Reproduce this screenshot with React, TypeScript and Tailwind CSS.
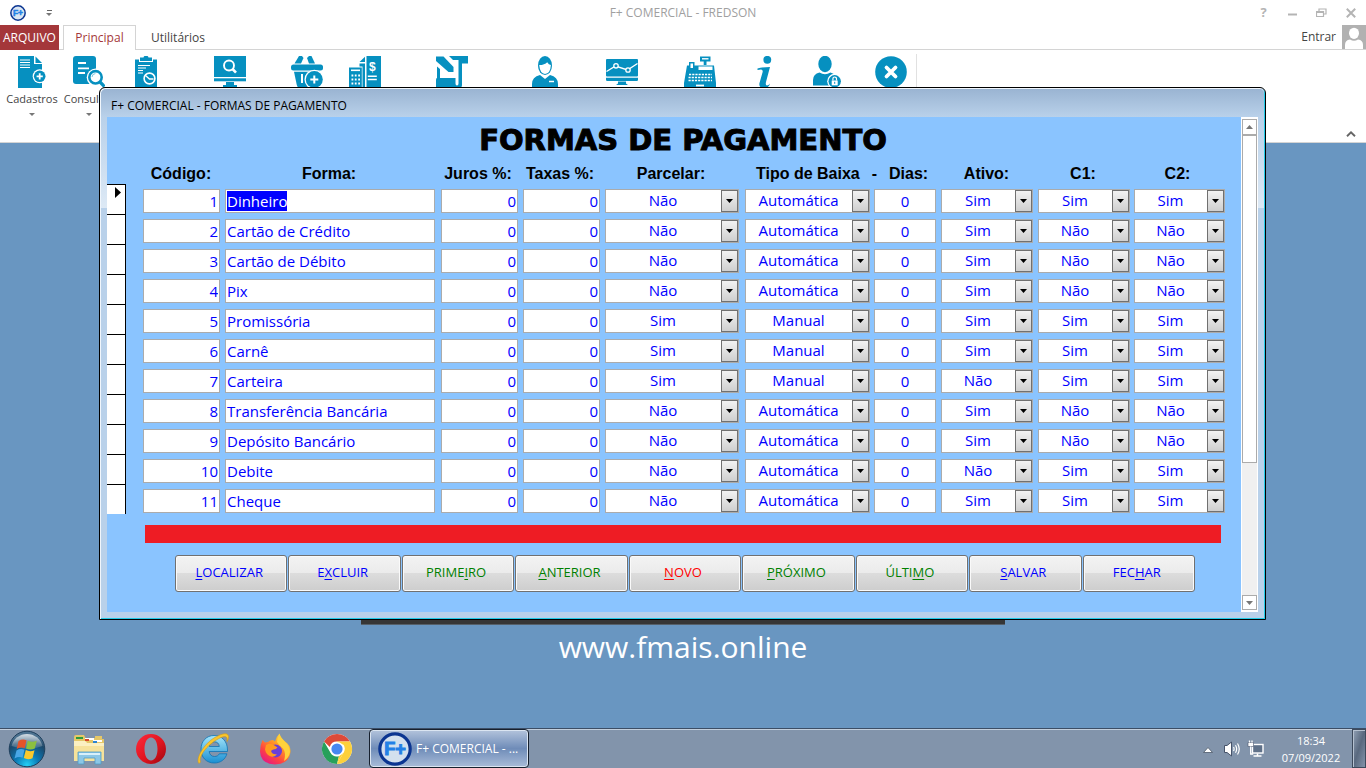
import { useEffect, useRef, useState } from "react";
import type { ReactNode } from "react";

const UI = "font-['Open_Sans','Noto_Sans',sans-serif]";

type Row = {
  codigo: number;
  forma: string;
  parcelar: string;
  tipo: string;
  ativo: string;
  c1: string;
  c2: string;
};

const ROWS: Row[] = [
  { codigo: 1, forma: "Dinheiro", parcelar: "Não", tipo: "Automática", ativo: "Sim", c1: "Sim", c2: "Sim" },
  { codigo: 2, forma: "Cartão de Crédito", parcelar: "Não", tipo: "Automática", ativo: "Sim", c1: "Não", c2: "Não" },
  { codigo: 3, forma: "Cartão de Débito", parcelar: "Não", tipo: "Automática", ativo: "Sim", c1: "Não", c2: "Não" },
  { codigo: 4, forma: "Pix", parcelar: "Não", tipo: "Automática", ativo: "Sim", c1: "Não", c2: "Não" },
  { codigo: 5, forma: "Promissória", parcelar: "Sim", tipo: "Manual", ativo: "Sim", c1: "Sim", c2: "Sim" },
  { codigo: 6, forma: "Carnê", parcelar: "Sim", tipo: "Manual", ativo: "Sim", c1: "Sim", c2: "Sim" },
  { codigo: 7, forma: "Carteira", parcelar: "Sim", tipo: "Manual", ativo: "Não", c1: "Sim", c2: "Sim" },
  { codigo: 8, forma: "Transferência Bancária", parcelar: "Não", tipo: "Automática", ativo: "Sim", c1: "Não", c2: "Não" },
  { codigo: 9, forma: "Depósito Bancário", parcelar: "Não", tipo: "Automática", ativo: "Sim", c1: "Não", c2: "Não" },
  { codigo: 10, forma: "Debite", parcelar: "Não", tipo: "Automática", ativo: "Não", c1: "Sim", c2: "Sim" },
  { codigo: 11, forma: "Cheque", parcelar: "Não", tipo: "Automática", ativo: "Sim", c1: "Sim", c2: "Sim" },
];

/* ---------- Ribbon icons ---------- */

function RibbonSvg({ children }: { children: ReactNode }) {
  return (
    <svg width="32" height="32" viewBox="0 0 32 32" fill="#0690c0" className="block shrink-0" aria-hidden="true">
      {children}
    </svg>
  );
}

const IconCadastros = (
  <RibbonSvg>
    <path d="M2 0h16v8h8v24H2z" />
    <path d="M19.5 0.5 26 7h-6.5z" />
    <path d="M4 4h10M4 6.5h10M4 9h10M4 11.5h10" stroke="#fff" strokeWidth="1" />
    <circle cx="23.7" cy="20.3" r="7" fill="#fff" />
    <circle cx="23.7" cy="20.3" r="5.8" />
    <path d="M23.7 17.2v6.2M20.6 20.3h6.2" stroke="#fff" strokeWidth="1.8" />
  </RibbonSvg>
);

const IconConsultas = (
  <RibbonSvg>
    <rect x="0" y="0" width="23" height="28" rx="3" />
    <path d="M5 7h8M5 12.3h11M5 17h7" stroke="#fff" strokeWidth="1.8" />
    <circle cx="22.7" cy="21.5" r="9" fill="#fff" />
    <circle cx="22.5" cy="21.3" r="6.2" fill="#fff" stroke="#0690c0" strokeWidth="2.6" />
    <path d="m27 26 4.5 4.5" stroke="#0690c0" strokeWidth="3.2" />
    <path d="M19 21a3.6 3.6 0 0 1 3.4-3.4" stroke="#7cc6df" strokeWidth="1" fill="none" />
  </RibbonSvg>
);

const IconRelatorios = (
  <RibbonSvg>
    <path d="M5 3.5h4V6h14V3.5h4V32H5z" />
    <path d="M10 1.5h3.5a2.6 2.6 0 0 1 5 0H22V5H10z" />
    <path d="M8 9.5h12M8 12h8M8 14.500h5M8 17h5" stroke="#fff" strokeWidth="1.1" />
    <circle cx="19.5" cy="22.500" r="5.4" stroke="#fff" strokeWidth="1.6" />
    <path d="M15.500 19.500 19.500 23h4" stroke="#fff" strokeWidth="1.3" fill="none" />
  </RibbonSvg>
);

const IconMonitorSearch = (
  <RibbonSvg>
    <rect x="0" y="0" width="32" height="21" />
    <rect x="0" y="22.300" width="32" height="3" />
    <path d="M12 26h8v3h3v3H9v-3h3z" />
    <circle cx="15" cy="9.500" r="5" fill="none" stroke="#fff" strokeWidth="1.9" />
    <path d="m18.500 13 3.500 3.700" stroke="#fff" strokeWidth="2.600" />
  </RibbonSvg>
);

const IconBasket = (
  <RibbonSvg>
    <path d="M8 0h3l1.500 2L10 7.500H3.500z" />
    <path d="M16 2 18 0h2.500L24 7.500h-6z" />
    <rect x="0" y="8.500" width="32" height="6" rx="2.500" />
    <path d="M3 15.800h26l-3 13.200q-1 3-3 3H9q-2.500 0-3.200-3z" />
    <path d="M11 18v9" stroke="#fff" strokeWidth="2" />
    <circle cx="23.300" cy="23.500" r="9.800" fill="#fff" />
    <circle cx="23.300" cy="23.500" r="8.500" />
    <path d="M23.300 19.500v8M19.300 23.500h8" stroke="#fff" strokeWidth="2" />
  </RibbonSvg>
);

const IconInvoice = (
  <RibbonSvg>
    <path d="M10.500 6 16 .8V6z" />
    <path d="M10.500 7.500H16V32h-2.500V10.500h-3z" />
    <rect x="17.500" y="0" width="14.500" height="32" />
    <rect x="0" y="11.500" width="12.800" height="20.500" />
    <path d="M2 14.300h9" stroke="#fff" strokeWidth="1.600" />
    <path d="M2.500 19.500h1.800M5.800 19.500h1.800M9.200 19.500H11M2.500 23.500h1.800M5.800 23.500h1.800M9.200 23.500H11M2.500 27.500h1.800M5.800 27.500h1.800M9.200 27.500H11" stroke="#fff" strokeWidth="2" />
    <text x="23.300" y="14.500" fontSize="12" fontWeight="700" fill="#fff" textAnchor="middle" fontFamily="Liberation Sans, sans-serif">$</text>
    <path d="M18.800 20.300h9M18.800 23.500h9" stroke="#fff" strokeWidth="1.500" />
  </RibbonSvg>
);

const IconDesign = (
  <RibbonSvg>
    <path d="M13 0h19v7.500h-6V29q0 3-3 3H0v-8q0-2 1-2V10.500l3 2.500v9h15.500v5.500q0 2 1.500 2t1.500-2V4H17z" />
    <path d="M0 0h9l11 12v6h-6L0 5.500z" fill="#fff" />
    <path d="M0 .5h7.500l10 10.500v5h-5L0 5z" />
  </RibbonSvg>
);

const IconUser = (
  <RibbonSvg>
    <path d="M3 32v-4q0-7 8-9l5 4 5-4q8 2 8 9v4z" />
    <ellipse cx="16" cy="9.500" rx="7" ry="9.500" />
    <path d="M10.200 9q5.500 0 8-2.800 1.500 2.500 3.700 2.800-.5 8.700-5.900 9-5-.5-5.800-9z" fill="#fff" />
    <path d="M20 25.500h5" stroke="#fff" strokeWidth="1.500" />
  </RibbonSvg>
);

const IconMonitorChart = (
  <RibbonSvg>
    <rect x="0" y="3" width="32" height="17.500" rx="1" />
    <path d="M0 21.800h32v2q0 1.200-1.200 1.200H1.200Q0 25 0 23.800z" />
    <path d="M12 25.500h8v2l2 1.500H10l2-1.500z" />
    <path d="m.5 15.500 9-5.500 12 4 10-6.500" fill="none" stroke="#fff" strokeWidth="1.400" />
    <circle cx="10" cy="9.800" r="2.200" stroke="#fff" strokeWidth="1.300" />
    <circle cx="22" cy="14" r="2.200" stroke="#fff" strokeWidth="1.300" />
  </RibbonSvg>
);

const IconRegister = (
  <RibbonSvg>
    <path d="M16 .5h10.500v5H22.500V9h-2.800V5.500H16z" />
    <path d="M18 2.800h6.500" stroke="#fff" strokeWidth="1.400" />
    <path d="M3 9.500h2V6h5.500v3.500H30l2 17.500v5H0v-5z" />
    <path d="M6.500 7.500h2.500V12H6.500zM14.500 10.500h14V14h-14z" fill="#fff" />
    <path d="M5 18.500h23M4.500 21.500h23.500M4.500 24.500h23.500" stroke="#fff" strokeWidth="1.700" strokeDasharray="2.200 1" />
    <path d="M12 29.500h8" stroke="#fff" strokeWidth="1.800" />
  </RibbonSvg>
);

const IconInfo = (
  <RibbonSvg>
    <circle cx="18.300" cy="3.800" r="3.900" />
    <path d="M8.500 12.500q4-1.500 12.500-1.500l-4 15q-.8 3.500 1 3.600 1.500 0 3-2.100-1 4.500-6.500 4.500-5 0-4-5l3-10.500q.8-3-1.500-3-1.500 0-3.500.5z" />
  </RibbonSvg>
);

const IconUserLock = (
  <RibbonSvg>
    <ellipse cx="14" cy="8" rx="6.700" ry="8.200" />
    <path d="M2 29.500V24q0-6 6.500-7.500 5.500 3.500 11 0 3 .8 5 3V29.500z" />
    <circle cx="23.700" cy="25.300" r="7.500" fill="#fff" />
    <circle cx="23.700" cy="25.300" r="6.200" />
    <rect x="20.700" y="24.500" width="6" height="4.800" fill="#fff" />
    <path d="M21.900 24.500v-1.700a1.800 1.800 0 0 1 3.600 0v1.700" fill="none" stroke="#fff" strokeWidth="1.200" />
    <path d="M23.700 25.800v2" stroke="#0690c0" strokeWidth="1" />
  </RibbonSvg>
);

const IconClose = (
  <RibbonSvg>
    <circle cx="16" cy="16" r="15.800" />
    <path d="m11.500 11.500 9 9m0-9-9 9" stroke="#fff" strokeWidth="3.800" strokeLinecap="round" />
  </RibbonSvg>
);

const RIBBON: { name: string; label?: string; width: string; icon: ReactNode }[] = [
  { name: "Cadastros", label: "Cadastros", width: "w-[58px]", icon: IconCadastros },
  { name: "Consultas", label: "Consultas", width: "w-14", icon: IconConsultas },
  { name: "Relatórios", width: "w-[58px]", icon: IconRelatorios },
  { name: "Monitor", width: "w-[110px]", icon: IconMonitorSearch },
  { name: "Vendas", width: "w-11", icon: IconBasket },
  { name: "Contas", width: "w-[72px]", icon: IconInvoice },
  { name: "Notas", width: "w-[102px]", icon: IconDesign },
  { name: "Usuário", width: "w-[84px]", icon: IconUser },
  { name: "Gráficos", width: "w-[70px]", icon: IconMonitorChart },
  { name: "Caixa", width: "w-[86px]", icon: IconRegister },
  { name: "Informações", width: "w-11", icon: IconInfo },
  { name: "Bloquear", width: "w-20", icon: IconUserLock },
  { name: "Sair", width: "w-12", icon: IconClose },
];

/* ---------- Logo ---------- */

function FLogo({ size, active }: { size: number; active?: boolean }) {
  return (
    <svg width={size} height={size} viewBox="0 0 32 32" aria-hidden="true" className="block shrink-0">
      <circle cx="16" cy="16" r="14.300" fill={active ? "#d3e0ee" : "#dbe6f3"} stroke="#0b3591" strokeWidth="3" />
      <text x="16" y="22" textAnchor="middle" fontSize="17" fontWeight="800" fill="#2480e6" stroke="#2480e6" strokeWidth="1" fontFamily="Liberation Sans, sans-serif">
        F+
      </text>
    </svg>
  );
}

/* ---------- Form fields ---------- */

const FIELD = "block h-6 w-full rounded-none border border-[#ababab] bg-white px-px pb-px text-[15px] leading-[21px] text-[#0000ff] outline-none";

function Combo({ label, value, options }: { label: string; value: string; options: string[] }) {
  return (
    <div className="grid items-center">
      <select
        aria-label={label}
        defaultValue={value}
        className={`${FIELD} col-start-1 row-start-1 appearance-none pr-[19px] text-center`}
      >
        {options.map((o) => (
          <option key={o}>{o}</option>
        ))}
      </select>
      <span className="pointer-events-none col-start-1 row-start-1 mr-px flex h-[22px] w-[17px] items-center justify-center justify-self-end border border-[#707070] bg-linear-to-b from-[#f2f2f2] to-[#cfcfcf]">
        <svg width="7" height="4" viewBox="0 0 7 4" aria-hidden="true">
          <path d="M0 0h7L3.500 4z" fill="#000" />
        </svg>
      </span>
    </div>
  );
}

const YES_NO = ["Sim", "Não"];

const ACTIONS: [string, string, string, string][] = [
  ["", "L", "OCALIZAR", "text-[#0000ff]"],
  ["E", "X", "CLUIR", "text-[#0000ff]"],
  ["PRIME", "I", "RO", "text-[#008000]"],
  ["", "A", "NTERIOR", "text-[#008000]"],
  ["", "N", "OVO", "text-[#ff0000]"],
  ["", "P", "RÓXIMO", "text-[#008000]"],
  ["ÚLTI", "M", "O", "text-[#008000]"],
  ["", "S", "ALVAR", "text-[#0000ff]"],
  ["FEC", "H", "AR", "text-[#0000ff]"],
];

function PaymentsTable() {
  const first = useRef<HTMLInputElement>(null);
  const [current, setCurrent] = useState(1);

  useEffect(() => {
    first.current?.focus();
    first.current?.select();
  }, []);

  return (
    <table className="w-full table-fixed border-collapse font-['Open_Sans','Noto_Sans',sans-serif]">
      <colgroup>
        <col className="w-9" />
        <col className="w-[82px]" />
        <col />
        <col className="w-[82px]" />
        <col className="w-[82px]" />
        <col className="w-[140px]" />
        <col className="w-[129px]" />
        <col className="w-[67px]" />
        <col className="w-[97px]" />
        <col className="w-24" />
        <col className="w-[107px]" />
      </colgroup>
      <thead className="font-['Liberation_Sans',Arial,sans-serif] text-base leading-[21px] font-bold text-black">
        <tr className="h-[21px] whitespace-nowrap">
          <td className="p-0" />
          <th className="p-0 pr-1.5">Código:</th>
          <th className="p-0 pr-2">Forma:</th>
          <th className="p-0 pr-2">Juros %:</th>
          <th className="p-0 pr-2">Taxas %:</th>
          <th className="p-0 pr-2">Parcelar:</th>
          <th className="p-0" colSpan={2}>
            <span className="flex gap-3 pl-[11px]">
              <span>Tipo de Baixa</span>
              <span>-</span>
              <span>Dias:</span>
            </span>
          </th>
          <th className="p-0 pr-1.5">Ativo:</th>
          <th className="p-0 pr-1.5">C1:</th>
          <th className="p-0 pr-5">C2:</th>
        </tr>
      </thead>
      <tbody>
        {ROWS.map((r) => (
          <tr key={r.codigo} className="h-[30px]" onFocus={() => setCurrent(r.codigo)}>
            <td className="p-0">
              <div className="flex h-[30px] w-[19px] border-t border-r border-black bg-white pt-0.5 pl-2">
                {current === r.codigo && (
                  <svg width="6" height="11" viewBox="0 0 6 11" aria-hidden="true">
                    <path d="M0 0 6 5.500 0 11z" fill="#000" />
                  </svg>
                )}
              </div>
            </td>
            <td className="pt-[5px] pr-[5px] pb-px pl-0">
              <input aria-label="Código" defaultValue={r.codigo} className={`${FIELD} text-right`} />
            </td>
            <td className="pt-[5px] pr-1.5 pb-px pl-0">
              <input
                ref={r.codigo === 1 ? first : undefined}
                aria-label="Forma"
                defaultValue={r.forma}
                className={`${FIELD} selection:bg-[#0000ff] selection:text-white`}
              />
            </td>
            <td className="pt-[5px] pr-[5px] pb-px pl-0">
              <input aria-label="Juros %" defaultValue="0" className={`${FIELD} text-right`} />
            </td>
            <td className="pt-[5px] pr-[5px] pb-px pl-0">
              <input aria-label="Taxas %" defaultValue="0" className={`${FIELD} text-right`} />
            </td>
            <td className="pt-[5px] pr-1.5 pb-px pl-0">
              <Combo label="Parcelar" value={r.parcelar} options={YES_NO} />
            </td>
            <td className="pt-[5px] pr-1 pb-px pl-0">
              <Combo label="Tipo de Baixa" value={r.tipo} options={["Automática", "Manual"]} />
            </td>
            <td className="pt-[5px] pr-[5px] pb-px pl-0">
              <input aria-label="Dias" defaultValue="0" className={`${FIELD} text-center`} />
            </td>
            <td className="pt-[5px] pr-[5px] pb-px pl-0">
              <Combo label="Ativo" value={r.ativo} options={YES_NO} />
            </td>
            <td className="pt-[5px] pr-1 pb-px pl-0">
              <Combo label="C1" value={r.c1} options={YES_NO} />
            </td>
            <td className="pt-[5px] pr-4 pb-px pl-0">
              <Combo label="C2" value={r.c2} options={YES_NO} />
            </td>
          </tr>
        ))}
      </tbody>
    </table>
  );
}

function PaymentsDialog() {
  return (
    <section
      role="dialog"
      aria-label="Formas de pagamento"
      className="absolute top-[87px] right-[100px] left-[99px] rounded-t-md border border-black bg-[linear-gradient(to_bottom,#b9d1ea_30px,#dde9f5_120px,#b9d1ea_120px)] shadow-[inset_1px_1px_0_#f0f6fc,inset_-1px_-1px_0_#22cbe8]"
    >
      <header className={`mx-px mt-px flex h-7 items-center rounded-t-[5px] bg-linear-to-b from-[#9ab4d2] to-[#b9d1ea] pt-1.5 pl-2.5 text-[12px] text-black ${UI}`}>
        F+ COMERCIAL - FORMAS DE PAGAMENTO
      </header>
      <div className="mx-[7px] mb-[7px] flex bg-[#8ac4ff]">
        <div className="min-w-0 flex-1 pb-5">
          <h1 className="flex h-[46px] items-center justify-center pt-px pl-[18px] font-['DejaVu_Sans',sans-serif] text-[29px] leading-none font-bold text-black [-webkit-text-stroke:1px_black]">
            FORMAS DE PAGAMENTO
          </h1>
          <PaymentsTable />
          <div className="mt-[11px] mr-5 ml-[38px] h-[18px] bg-[#ee1c24]" />
          <div className={`mt-3 mr-[46px] ml-[68px] grid grid-cols-9 gap-px text-[13px] ${UI}`}>
            {ACTIONS.map(([before, key, after, color]) => (
              <button
                key={before + key}
                type="button"
                className={`h-[37px] rounded-[3px] border border-[#707070] bg-[linear-gradient(to_bottom,#f3f3f3,#ebebeb_48%,#dddddd_48%,#cdcdcd)] pr-1 pb-0.5 shadow-[inset_0_0_0_1px_#fafafa] ${color}`}
              >
                {before}
                <span className="underline underline-offset-2">{key}</span>
                {after}
              </button>
            ))}
          </div>
        </div>
        <div className="flex w-[17px] flex-col bg-white px-px py-0.5">
          <button type="button" aria-label="Rolar para cima" className="flex h-4 items-center justify-center border border-[#ababab] bg-white">
            <svg width="7" height="4" viewBox="0 0 7 4" aria-hidden="true">
              <path d="M0 4h7L3.500 0z" fill="#777" />
            </svg>
          </button>
          <div className="h-[328px] border border-[#ababab] bg-white" />
          <div className="flex-1 bg-[#f0f0f0]" />
          <button type="button" aria-label="Rolar para baixo" className="flex h-[15px] items-center justify-center border border-[#ababab] bg-white">
            <svg width="7" height="4" viewBox="0 0 7 4" aria-hidden="true">
              <path d="M0 0h7L3.500 4z" fill="#777" />
            </svg>
          </button>
        </div>
      </div>
    </section>
  );
}

/* ---------- Taskbar icons ---------- */

const StartOrb = (
  <svg width="38" height="38" viewBox="0 0 38 38" aria-hidden="true">
    <defs>
      <radialGradient id="orb" cx="50%" cy="95%" r="85%">
        <stop offset="0" stopColor="#23d0f5" />
        <stop offset=".4" stopColor="#0b78b4" />
        <stop offset=".8" stopColor="#1c4769" />
        <stop offset="1" stopColor="#4c7290" />
      </radialGradient>
      <linearGradient id="gloss" x1="0" y1="0" x2="0" y2="1">
        <stop offset="0" stopColor="#fff" stopOpacity=".75" />
        <stop offset="1" stopColor="#fff" stopOpacity=".1" />
      </linearGradient>
    </defs>
    <circle cx="19" cy="19" r="17.800" fill="url(#orb)" stroke="#1f3f5c" strokeWidth="1" />
    <path d="M3.500 16a16 16 0 0 1 31 0q-15 6-31 0z" fill="url(#gloss)" />
    <path d="M10.500 11q4-2.500 8-.8l-1.800 8q-4-1.700-8 .8z" fill="#e5532a" />
    <path d="M19.800 10.700q4 2 9 0l-2 7.800q-4.500 2-8.800 0z" fill="#8bc040" />
    <path d="M8.500 20.500q4-2.500 8-.7l-2 8q-3.500-1.700-8 .7z" fill="#49a7e6" />
    <path d="M17.800 20q4 2.200 8.700.2l-2 8q-4.700 2-8.700-.2z" fill="#fbc92d" />
  </svg>
);

const ExplorerIcon = (
  <svg width="32" height="32" viewBox="0 0 32 32" aria-hidden="true">
    <path d="M1 4q0-2 2-2h8l1.500 3H22V3h7v3h2v22H1z" fill="#e5c768" />
    <path d="M3 4h7v2H3z" fill="#2e9b3c" />
    <path d="M12 5h9v2h-9z" fill="#fff" />
    <path d="M12 6h4v2h-4z" fill="#d9482b" />
    <path d="M20 7h9v2h-9z" fill="#fff" />
    <path d="M20 8h4v2h-4z" fill="#2b84d2" />
    <path d="M1 8h11l2 2h17v18H1z" fill="#f6e29b" />
    <path d="M1 8h11l2 2h17v3H1z" fill="#fbf0c2" />
    <path d="M5 19h23v12h-6v-6H11v6H5z" fill="#8cc7e6" stroke="#4f9cc7" strokeWidth=".8" />
    <path d="M6 20h21v2H6z" fill="#d8f0fa" />
  </svg>
);

const OperaIcon = (
  <svg width="32" height="32" viewBox="0 0 32 32" aria-hidden="true">
    <defs>
      <linearGradient id="opera" x1="0" y1="0" x2="1" y2="1">
        <stop offset="0" stopColor="#ff2a3c" />
        <stop offset=".55" stopColor="#e0141f" />
        <stop offset="1" stopColor="#9c0610" />
      </linearGradient>
    </defs>
    <path fillRule="evenodd" d="M16 1a15 15 0 1 1 0 30 15 15 0 0 1 0-30zm0 3.500c-4 0-6.500 5-6.500 11.500S12 27.500 16 27.500 22.500 22.500 22.500 16 20 4.500 16 4.500z" fill="url(#opera)" />
  </svg>
);

const IeIcon = (
  <svg width="34" height="34" viewBox="0 0 34 34" aria-hidden="true">
    <defs>
      <linearGradient id="ie" x1="0" y1="0" x2="0" y2="1">
        <stop offset="0" stopColor="#a5e6fb" />
        <stop offset="1" stopColor="#1a8fd2" />
      </linearGradient>
    </defs>
    <path fillRule="evenodd" d="M18 3.500c8 0 13.500 6 13.500 14.500v1.500H13.200c.3 3 2.200 5 5.300 5 2.300 0 4-1 4.800-2.700h7.600C29.300 27.500 24.500 31 18.300 31 10.500 31 5 25.500 5 17.300 5 9.200 10.500 3.500 18 3.500zM13.300 14.500h10c-.3-3-2-4.700-5-4.700-2.800 0-4.600 1.700-5 4.700z" fill="url(#ie)" stroke="#0f73b5" strokeWidth=".8" />
    <path d="M3 31.500C-1 27 8 12 18 6c7-4 12-5.500 14-3 1.200 1.800.5 4-1 6.500.3-2.500.3-3.700-.7-4.500C28 3.500 22 6.500 16 11 8 17 2.500 26 4.500 30z" fill="#fbc62c" stroke="#d69a10" strokeWidth=".6" />
  </svg>
);

const FirefoxIcon = (
  <svg width="32" height="32" viewBox="0 0 32 32" aria-hidden="true">
    <defs>
      <linearGradient id="fox" x1=".9" y1="0" x2=".2" y2="1">
        <stop offset="0" stopColor="#fff14f" />
        <stop offset=".35" stopColor="#ffa622" />
        <stop offset=".7" stopColor="#ff4440" />
        <stop offset="1" stopColor="#e3148a" />
      </linearGradient>
    </defs>
    <path d="M3.500 7 6 9.500l3-.5q2-2 5-2l2 1.500q1.500-5 4.500-8Q21 4 26 8.500q6 4 5.500 10.500-1 12-15.500 12.500Q1.500 31 1 18.500 1 12 3.500 7z" fill="url(#fox)" />
    <circle cx="16.500" cy="18" r="6.500" fill="#6b3fd6" />
    <path d="M7 12q5-2.500 8.500.5l3 2q-1.500 2-4 2-1.500 0-2.500 1.500 1.500 4 6 3-2 3.500-6 2.500-5-1.500-6-7z" fill="#ff9a1f" />
    <path d="M20.500 1q.5 3 4 6.500 6.500 5 6.500 11.500-1 6-6 9 2.500-8-1-12.500-4-3-6-6.500.500-5 2.500-8z" fill="#ffd23c" />
  </svg>
);

const ChromeIcon = (
  <svg width="32" height="32" viewBox="0 0 32 32" aria-hidden="true">
    <circle cx="16" cy="16" r="15" fill="#fff" />
    <path d="M16 1a15 15 0 0 1 13 7.500H16a7.500 7.500 0 0 0-7.200 5.400L3 8.500A15 15 0 0 1 16 1z" fill="#dd4a38" />
    <path d="M29 8.500A15 15 0 0 1 16 31l6.500-11.300A7.500 7.500 0 0 0 22 11z" fill="#fdd03a" />
    <path d="M29 8.500H16v3h9z" fill="#fdd03a" />
    <path d="M3 8.500 9.500 19.800A7.500 7.500 0 0 0 18 23.200L16 31A15 15 0 0 1 3 8.500z" fill="#27a05b" />
    <path d="M22.500 19.700 16 31l2-8z" fill="#fdd03a" />
    <circle cx="16" cy="16" r="7" fill="#fff" />
    <circle cx="16" cy="16" r="5.600" fill="#4688f1" />
  </svg>
);

const PINNED: { name: string; icon: ReactNode }[] = [
  { name: "Explorador", icon: ExplorerIcon },
  { name: "Opera", icon: OperaIcon },
  { name: "Internet Explorer", icon: IeIcon },
  { name: "Firefox", icon: FirefoxIcon },
  { name: "Chrome", icon: ChromeIcon },
];

function Taskbar() {
  return (
    <footer className={`flex h-10 items-stretch border-t border-[#3c4e66] bg-[#8294ab] text-white shadow-[inset_0_1px_0_#c3cfdd] ${UI}`}>
      <button type="button" aria-label="Iniciar" className="ml-2 flex items-center">
        {StartOrb}
      </button>
      <nav className="ml-3 flex" aria-label="Programas">
        {PINNED.map((p) => (
          <button key={p.name} type="button" aria-label={p.name} className="flex w-[62px] items-center justify-center">
            {p.icon}
          </button>
        ))}
      </nav>
      <button
        type="button"
        className="ml-px flex w-40 items-center gap-1 rounded-sm border border-[#16202e] bg-linear-to-b from-[#b4c4dc] via-[#6f8cb8] via-50% to-[#a9bcd8] pl-2 text-[12px] whitespace-nowrap shadow-[inset_0_0_0_1px_#dbe5f1]"
      >
        <FLogo size={34} active />
        <span>F+ COMERCIAL - ...</span>
      </button>
      <div className="ml-auto flex items-center">
        <button type="button" aria-label="Mostrar ícones ocultos" className="flex w-[22px] justify-center pt-0.5">
          <svg width="10" height="6" viewBox="0 0 10 6" aria-hidden="true">
            <path d="M5 .5 9.500 5.500h-9z" fill="#fff" stroke="#4b5868" strokeWidth=".8" />
          </svg>
        </button>
        <svg width="18" height="16" viewBox="0 0 18 16" className="ml-1" role="img" aria-label="Volume">
          <path d="M1.500 4.500H4L8.500 1v14L4 11.500H1.500z" fill="#fff" stroke="#46536a" strokeWidth="1" />
          <path d="M10.500 6q1.200 2 0 4M12.500 4.300q2.300 3.700 0 7.400M14.500 2.500q3.500 5.500 0 11" fill="none" stroke="#fff" strokeWidth="1.200" />
        </svg>
        <svg width="18" height="18" viewBox="0 0 18 18" className="ml-1.5" role="img" aria-label="Rede">
          <rect x="5.500" y="4.500" width="10.500" height="8.500" fill="#5f7189" stroke="#fff" strokeWidth="1.400" />
          <path d="M6.500 16h8M10.500 13.500V16" stroke="#fff" strokeWidth="1.500" fill="none" />
          <path d="M1 2.500h5.500v4H1z" fill="#fff" stroke="#46536a" strokeWidth=".6" />
          <path d="M2.500.5v2M5 .5v2M3.700 6.500V14h2.500" fill="none" stroke="#fff" strokeWidth="1.300" />
        </svg>
        <div className="ml-3 w-[68px] text-center text-[11px] leading-[17px]">
          <div>18:34</div>
          <div>07/09/2022</div>
        </div>
      </div>
      <button
        type="button"
        aria-label="Mostrar área de trabalho"
        className="ml-[7px] w-[14px] border border-[#3d4a5c] bg-linear-to-br from-[#93a2b6] via-[#59697f] to-[#8494aa] shadow-[inset_1px_1px_0_#b5c1d0]"
      />
    </footer>
  );
}

/* ---------- Application frame ---------- */

const CaretDown = (
  <svg width="6" height="3" viewBox="0 0 6 3" aria-hidden="true">
    <path d="M0 0h6L3 3z" fill="#777" />
  </svg>
);

function TitleBar() {
  return (
    <div className="grid h-[25px] grid-cols-3 items-center">
      <div className="flex items-center gap-5 pl-2.5">
        <FLogo size={16} />
        <button type="button" aria-label="Personalizar barra" className="flex flex-col items-center gap-0.5">
          <span className="h-px w-[5px] bg-[#666]" />
          {CaretDown}
        </button>
      </div>
      <div className="text-center text-[12px] leading-[24px] text-[#a0a0a0]">F+ COMERCIAL - FREDSON</div>
      <div className="flex items-center justify-end pr-px text-[#b4b4b4]">
        <button type="button" aria-label="Ajuda" className="w-[29px] text-[13px] leading-none font-bold">
          ?
        </button>
        <button type="button" aria-label="Minimizar" className="flex w-[29px] justify-center">
          <svg width="10" height="10" viewBox="0 0 10 10" aria-hidden="true">
            <path d="M0 6.500h9" stroke="currentColor" strokeWidth="2" />
          </svg>
        </button>
        <button type="button" aria-label="Restaurar" className="flex w-[29px] justify-center">
          <svg width="11" height="10" viewBox="0 0 11 10" aria-hidden="true">
            <path d="M3 3V1h7v5H8M.5 3.500h7v5h-7zM.5 4.500h7" fill="none" stroke="currentColor" strokeWidth="1.200" />
          </svg>
        </button>
        <button type="button" aria-label="Fechar" className="flex w-[29px] justify-center">
          <svg width="10" height="10" viewBox="0 0 10 10" aria-hidden="true">
            <path d="m.8.800 8.400 8.400m0-8.400L.8 9.200" stroke="currentColor" strokeWidth="2" />
          </svg>
        </button>
      </div>
    </div>
  );
}

function Tabs() {
  return (
    <div className="flex h-[25px] text-[12px] text-[#444]">
      <button type="button" className="w-[59px] bg-[#a4373a] text-white">
        ARQUIVO
      </button>
      <div className="w-1 border-b border-[#d4d4d4]" />
      <button type="button" className="w-[73px] border border-b-0 border-[#d4d4d4] text-[#a4373a]">
        Principal
      </button>
      <div className="flex flex-1 items-center justify-between border-b border-[#d4d4d4] pl-[15px]">
        <button type="button" className="pt-px">Utilitários</button>
        <button type="button" className="flex items-center gap-1.5">
          Entrar
          <svg width="24" height="24" viewBox="0 0 24 24" aria-hidden="true">
            <path d="M0 0h24v24H0z" fill="#b1b1b1" />
            <ellipse cx="12" cy="8.300" rx="5" ry="5.600" fill="#fff" />
            <path d="M3 24v-4q0-5 5-5.500 4 2.500 8 0 5 .5 5 5.500v4z" fill="#fff" />
          </svg>
        </button>
      </div>
    </div>
  );
}

function Ribbon() {
  return (
    <div className="flex h-[93px] border-b border-[#d4d4d4] pl-[3px]">
      {RIBBON.map((item) => (
        <button
          key={item.name}
          type="button"
          aria-label={item.name}
          className={`flex shrink-0 flex-col items-center pt-1.5 text-[11px] leading-4 text-[#444] ${item.width}`}
        >
          {item.icon}
          {item.label && (
            <>
              <span className="mt-[3px] mb-1.5">{item.label}</span>
              {CaretDown}
            </>
          )}
        </button>
      ))}
      <div className="my-1 ml-px w-px bg-[#e1e1e1]" />
      <button type="button" aria-label="Recolher a faixa de opções" className="mr-2.5 mb-[5px] ml-auto self-end">
        <svg width="10" height="6" viewBox="0 0 10 6" aria-hidden="true">
          <path d="M1 5.200 5 1.300l4 3.900" fill="none" stroke="#666" strokeWidth="1.900" />
        </svg>
      </button>
    </div>
  );
}

export default function App() {
  return (
    <div className="relative flex min-h-screen flex-col bg-[#6996c1]">
      <header className={`bg-white ${UI}`}>
        <TitleBar />
        <Tabs />
        <Ribbon />
      </header>
      <main className="flex flex-1 flex-col items-center">
        <div className="h-[482px] w-[644px] border-b border-[#56606a] bg-[#363636]" />
        <p className="font-['Open_Sans','Noto_Sans',sans-serif] text-[30px] leading-[44px] text-white">www.fmais.online</p>
      </main>
      <PaymentsDialog />
      <Taskbar />
    </div>
  );
}
